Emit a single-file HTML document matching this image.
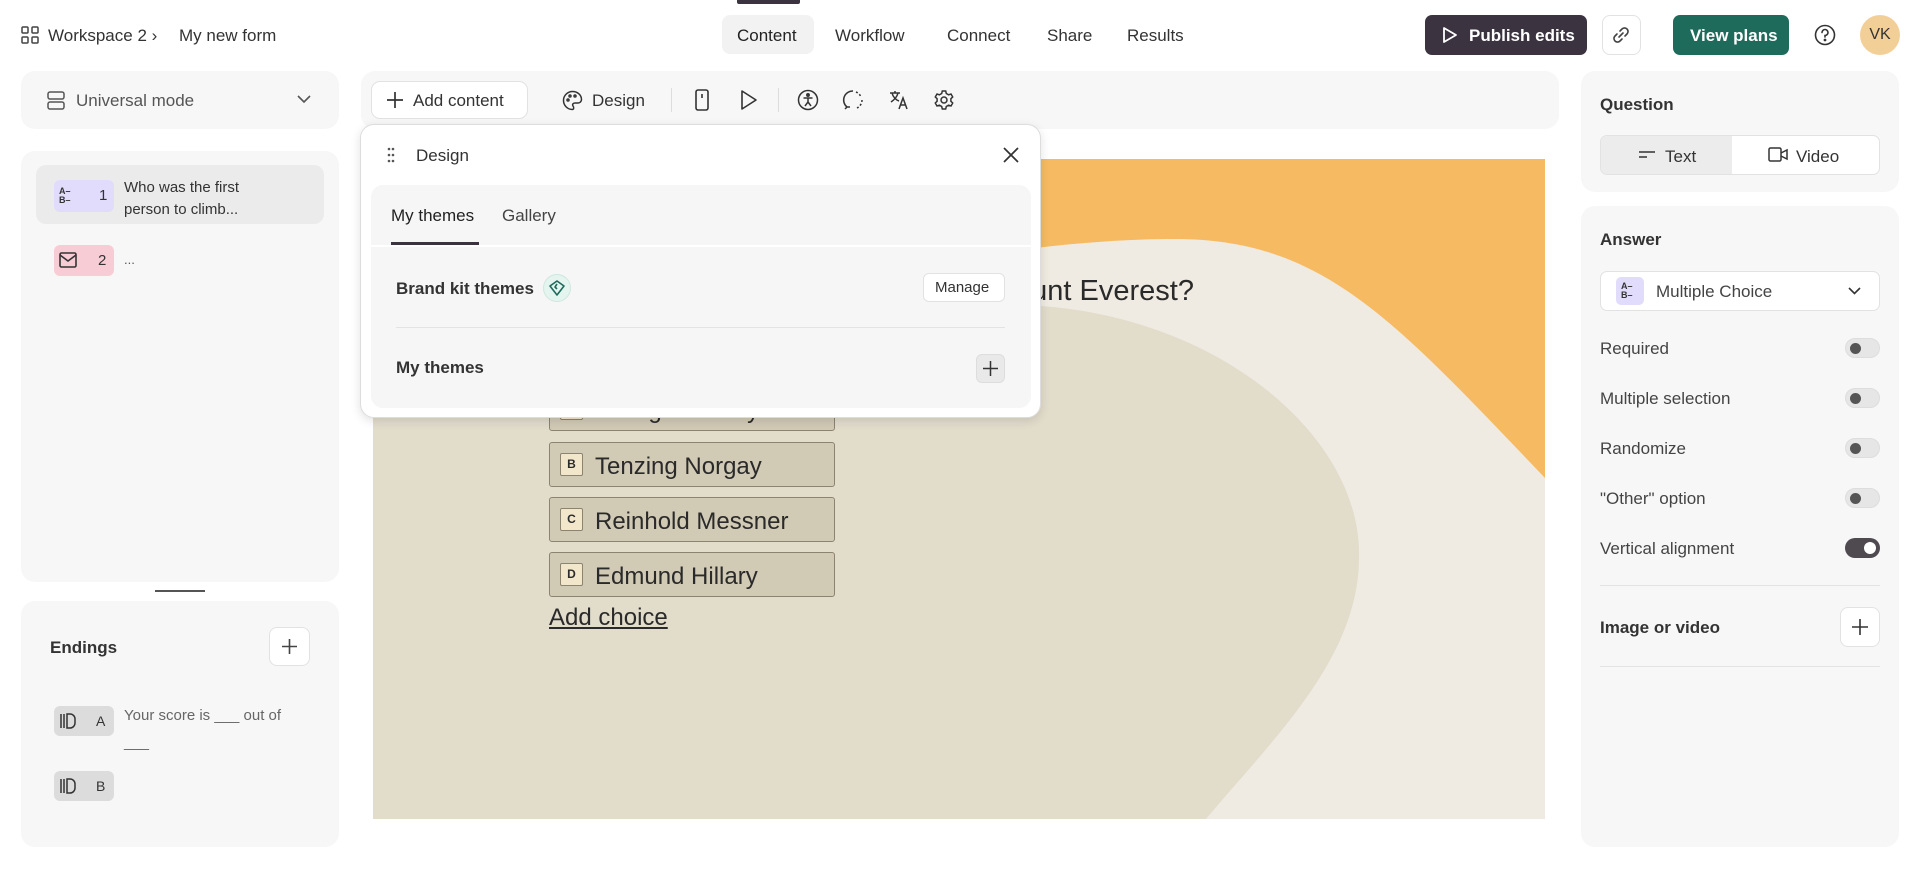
<!DOCTYPE html>
<html><head><meta charset="utf-8"><style>
*{box-sizing:border-box;margin:0;padding:0}
body{width:1920px;height:869px;background:#fff;font-family:"Liberation Sans",sans-serif;color:#2c2c2c;position:relative;overflow:hidden}
.a{position:absolute}
.panel{position:absolute;background:#f7f7f7;border-radius:14px}
.t{position:absolute;white-space:nowrap;line-height:1}
svg{position:absolute;overflow:visible}
.tog{position:absolute;left:1845px;width:35px;height:20px;border-radius:10px;background:#e6e6e6;border:1px solid #ddd}
.tog::after{content:"";position:absolute;left:4px;top:4px;width:11px;height:11px;border-radius:50%;background:#555}
.btn{position:absolute;background:#fff;border:1px solid #e2e2e2;border-radius:8px}
.choice{position:absolute;left:549px;width:286px;height:45px;background:#d1cab5;border:1px solid #8b8470;border-radius:3px}
.choice .k{position:absolute;left:10px;top:10px;width:23px;height:23px;background:#f3e7cb;border:1px solid #8b8470;border-radius:2px;font-size:12px;font-weight:bold;text-align:center;line-height:21px}
.choice .l{position:absolute;left:45px;top:10px;font-size:24px;color:#2a2a2a;white-space:nowrap}
</style></head><body>

<!-- top bar -->
<svg style="left:21px;top:26px" width="18" height="18" viewBox="0 0 18 18" fill="none" stroke="#444" stroke-width="1.5"><rect x="1" y="1" width="6" height="6" rx="1"/><rect x="11" y="1" width="6" height="6" rx="1"/><rect x="1" y="11" width="6" height="6" rx="1"/><rect x="11" y="11" width="6" height="6" rx="1"/></svg>
<div class="t" style="left:48px;top:27px;font-size:17px;color:#333">Workspace 2 ›</div>
<div class="t" style="left:179px;top:27px;font-size:17px;color:#333">My new form</div>

<div class="a" style="left:737px;top:0;width:63px;height:4px;background:#3b3440;border-radius:0 0 2px 2px"></div>
<div class="a" style="left:722px;top:15px;width:92px;height:39px;background:#f2f2f2;border-radius:8px"></div>
<div class="t" style="left:737px;top:27px;font-size:17px;color:#222">Content</div>
<div class="t" style="left:835px;top:27px;font-size:17px;color:#333">Workflow</div>
<div class="t" style="left:947px;top:27px;font-size:17px;color:#333">Connect</div>
<div class="t" style="left:1047px;top:27px;font-size:17px;color:#333">Share</div>
<div class="t" style="left:1127px;top:27px;font-size:17px;color:#333">Results</div>

<div class="a" style="left:1425px;top:15px;width:162px;height:40px;background:#3b3440;border-radius:7px"></div>
<svg style="left:1442px;top:26px" width="16" height="18" viewBox="0 0 16 18" fill="none" stroke="#fff" stroke-width="1.8" stroke-linejoin="round"><path d="M2 2 L14 9 L2 16 Z"/></svg>
<div class="t" style="left:1469px;top:27px;font-size:17px;color:#fff;font-weight:bold">Publish edits</div>
<div class="btn" style="left:1602px;top:15px;width:39px;height:40px"></div>
<svg style="left:1612px;top:26px" width="18" height="18" viewBox="0 0 18 18" fill="none" stroke="#444" stroke-width="1.6" stroke-linecap="round"><path d="M8 5 L10 3 A3 3 0 0 1 15 8 L13 10 M10 13 L8 15 A3 3 0 0 1 3 10 L5 8 M7 11 L11 7"/></svg>
<div class="a" style="left:1673px;top:15px;width:116px;height:40px;background:#1f6b5b;border-radius:7px"></div>
<div class="t" style="left:1690px;top:27px;font-size:17px;color:#fff;font-weight:bold">View plans</div>
<svg style="left:1814px;top:24px" width="22" height="22" viewBox="0 0 22 22" fill="none" stroke="#333" stroke-width="1.6"><circle cx="11" cy="11" r="9.5"/><path d="M8 8.5 A3 3 0 1 1 11 11.5 L11 13" stroke-linecap="round"/><circle cx="11" cy="16" r=".6" fill="#333"/></svg>
<div class="a" style="left:1860px;top:15px;width:40px;height:40px;border-radius:50%;background:#f3cf98;font-size:16px;line-height:40px;text-align:center;color:#333">VK</div>

<!-- left -->
<div class="panel" style="left:21px;top:71px;width:318px;height:58px"></div>
<svg style="left:47px;top:91px" width="18" height="19" viewBox="0 0 18 19" fill="none" stroke="#555" stroke-width="1.5"><rect x="1" y="1" width="16" height="7" rx="2"/><rect x="1" y="11" width="16" height="7" rx="2"/></svg>
<div class="t" style="left:76px;top:92px;font-size:17px;color:#555">Universal mode</div>
<svg style="left:297px;top:95px" width="14" height="9" viewBox="0 0 14 9" fill="none" stroke="#555" stroke-width="1.6"><path d="M1 1 L7 7 L13 1"/></svg>

<div class="panel" style="left:21px;top:151px;width:318px;height:431px"></div>
<div class="a" style="left:36px;top:165px;width:288px;height:59px;background:#ebebeb;border-radius:10px"></div>
<div class="a" style="left:54px;top:180px;width:60px;height:32px;background:#e1dcfb;border-radius:6px"></div>
<div class="t" style="left:59px;top:187px;font-size:9px;font-weight:bold;line-height:9px;color:#333">A–<br>B–</div>
<div class="t" style="left:99px;top:188px;font-size:15px;color:#333">1</div>
<div class="t" style="left:124px;top:177px;font-size:15px;color:#333;line-height:22px">Who was the first<br>person to climb...</div>
<div class="a" style="left:54px;top:245px;width:60px;height:31px;background:#f8ccd5;border-radius:6px"></div>
<svg style="left:59px;top:252px" width="18" height="16" viewBox="0 0 18 16" fill="none" stroke="#333" stroke-width="1.6"><rect x="1" y="1" width="16" height="14" rx="1.5"/><path d="M1 3 L9 9 L17 3"/></svg>
<div class="t" style="left:98px;top:253px;font-size:15px;color:#333">2</div>
<div class="t" style="left:124px;top:253px;font-size:13px;color:#555">...</div>

<div class="a" style="left:155px;top:590px;width:50px;height:2px;background:#555"></div>

<div class="panel" style="left:21px;top:601px;width:318px;height:246px"></div>
<div class="t" style="left:50px;top:639px;font-size:17px;font-weight:bold;color:#333">Endings</div>
<div class="btn" style="left:269px;top:627px;width:41px;height:39px"></div>
<svg style="left:281px;top:638px" width="17" height="17" viewBox="0 0 17 17" stroke="#444" stroke-width="1.6"><path d="M8.5 1 V16 M1 8.5 H16"/></svg>
<div class="a" style="left:54px;top:706px;width:60px;height:30px;background:#dcdcdc;border-radius:6px"></div>
<svg style="left:60px;top:713px" width="16" height="16" viewBox="0 0 16 16" fill="none" stroke="#333" stroke-width="1.5"><path d="M1 1 V15 M4 1 V15 M7 1 H10 A5 5 0 0 1 15 6 V10 A5 5 0 0 1 10 15 H7 Z"/></svg>
<div class="t" style="left:96px;top:714px;font-size:14px;color:#333">A</div>
<div class="t" style="left:124px;top:702px;font-size:15px;color:#666;line-height:27px">Your score is ___ out of<br>___</div>
<div class="a" style="left:54px;top:771px;width:60px;height:30px;background:#dcdcdc;border-radius:6px"></div>
<svg style="left:60px;top:778px" width="16" height="16" viewBox="0 0 16 16" fill="none" stroke="#333" stroke-width="1.5"><path d="M1 1 V15 M4 1 V15 M7 1 H10 A5 5 0 0 1 15 6 V10 A5 5 0 0 1 10 15 H7 Z"/></svg>
<div class="t" style="left:96px;top:779px;font-size:14px;color:#333">B</div>

<!-- toolbar -->
<div class="panel" style="left:361px;top:71px;width:1198px;height:58px"></div>
<div class="btn" style="left:371px;top:81px;width:157px;height:38px;border-radius:9px"></div>
<svg style="left:387px;top:92px" width="16" height="16" viewBox="0 0 16 16" stroke="#333" stroke-width="1.7"><path d="M8 0 V16 M0 8 H16"/></svg>
<div class="t" style="left:413px;top:92px;font-size:17px;color:#333">Add content</div>
<svg style="left:562px;top:90px" width="21" height="21" viewBox="0 0 21 21" fill="none" stroke="#333" stroke-width="1.5"><path d="M10.5 1.5 A9 9 0 1 0 10.5 19.5 C12 19.5 12 17 11 16 C10 14.5 11 13 13 13 H16 A3.5 3.5 0 0 0 19.5 9.5 C19.5 5 15.5 1.5 10.5 1.5 Z"/><circle cx="6" cy="10" r="1"/><circle cx="8" cy="6" r="1"/><circle cx="13" cy="6" r="1"/></svg>
<div class="t" style="left:592px;top:92px;font-size:17px;color:#333">Design</div>
<div class="a" style="left:671px;top:88px;width:1px;height:24px;background:#ddd"></div>
<svg style="left:695px;top:89px" width="14" height="22" viewBox="0 0 14 22" fill="none" stroke="#333" stroke-width="1.6"><rect x="1" y="1" width="12" height="20" rx="2"/><path d="M7 5 V9"/></svg>
<svg style="left:740px;top:89px" width="18" height="22" viewBox="0 0 18 22" fill="none" stroke="#333" stroke-width="1.6" stroke-linejoin="round"><path d="M2 2 L16 11 L2 20 Z"/></svg>
<div class="a" style="left:778px;top:88px;width:1px;height:24px;background:#ddd"></div>
<svg style="left:797px;top:89px" width="22" height="22" viewBox="0 0 22 22" fill="none" stroke="#333" stroke-width="1.5"><circle cx="11" cy="11" r="9.5"/><circle cx="11" cy="6" r="1.2" fill="#333"/><path d="M6.5 9 H15.5 M11 9 V13 L8 17 M11 13 L14 17"/></svg>
<svg style="left:842px;top:89px" width="22" height="22" viewBox="0 0 22 22" fill="none" stroke="#333" stroke-width="1.5"><path d="M11 2 A9 9 0 0 0 5 18" /><path d="M5 18 L3 20 M5 18 L8 18"/><path d="M14 3 A9 9 0 0 1 19 8" stroke-dasharray="2 2"/><path d="M20 11 A9 9 0 0 1 15 19" stroke-dasharray="2 2"/></svg>
<svg style="left:888px;top:89px" width="22" height="22" viewBox="0 0 22 22" fill="none" stroke="#333" stroke-width="1.5"><path d="M2 4 H12 M7 2 V4 M4 4 C5 8 8 11 11 12 M10 4 C9 8 6 11 3 13 M11 20 L15 9 L19 20 M12.5 16 H17.5"/></svg>
<svg style="left:933px;top:89px" width="22" height="22" viewBox="0 0 22 22" fill="none" stroke="#333" stroke-width="1.5"><circle cx="11" cy="11" r="3"/><path d="M9.3 2 H12.7 L13.3 4.5 L15.6 5.8 L18 5 L19.7 8 L17.9 9.7 V12.3 L19.7 14 L18 17 L15.6 16.2 L13.3 17.5 L12.7 20 H9.3 L8.7 17.5 L6.4 16.2 L4 17 L2.3 14 L4.1 12.3 V9.7 L2.3 8 L4 5 L6.4 5.8 L8.7 4.5 Z"/></svg>

<!-- canvas -->
<svg style="left:373px;top:159px" width="1172" height="660" viewBox="0 0 1172 660">
<rect width="1172" height="660" fill="#f6bb62"/>
<path d="M0,257 C300,150 600,80 802,80 C950,80 1020,160 1172,319 L1172,660 L0,660 Z" fill="#efebe2"/>
<path d="M0,210 C250,150 500,140 668,147 C850,160 990,280 986,400 C985,500 900,580 833,660 L0,660 Z" fill="#e2dccb"/>
</svg>
<div class="t" style="left:0px;top:277px;width:1194px;text-align:right;font-size:29px;color:#2a2a2a">Who was the first person to climb Mount Everest?</div>
<div class="choice" style="top:386px"><div class="k">A</div><div class="l">George Mallory</div></div>
<div class="choice" style="top:442px"><div class="k">B</div><div class="l">Tenzing Norgay</div></div>
<div class="choice" style="top:497px"><div class="k">C</div><div class="l">Reinhold Messner</div></div>
<div class="choice" style="top:552px"><div class="k">D</div><div class="l">Edmund Hillary</div></div>
<div class="t" style="left:549px;top:606px;font-size:24px;color:#2a2a2a;text-decoration:underline">Add choice</div>

<!-- design popup -->
<div class="a" style="left:360px;top:124px;width:681px;height:294px;background:#fff;border:1px solid #ddd;border-radius:14px;box-shadow:0 3px 10px rgba(0,0,0,.12)"></div>
<svg style="left:387px;top:147px" width="8" height="16" viewBox="0 0 8 16" fill="#555"><circle cx="2" cy="2" r="1.3"/><circle cx="6" cy="2" r="1.3"/><circle cx="2" cy="8" r="1.3"/><circle cx="6" cy="8" r="1.3"/><circle cx="2" cy="14" r="1.3"/><circle cx="6" cy="14" r="1.3"/></svg>
<div class="t" style="left:416px;top:147px;font-size:17px;color:#333">Design</div>
<svg style="left:1003px;top:147px" width="16" height="16" viewBox="0 0 16 16" stroke="#333" stroke-width="1.7"><path d="M1 1 L15 15 M15 1 L1 15"/></svg>
<div class="a" style="left:371px;top:185px;width:660px;height:223px;background:#f6f6f6;border-radius:12px"></div>
<div class="a" style="left:371px;top:245px;width:660px;height:2px;background:#fff"></div>
<div class="t" style="left:391px;top:207px;font-size:17px;color:#222">My themes</div>
<div class="t" style="left:502px;top:207px;font-size:17px;color:#444">Gallery</div>
<div class="a" style="left:391px;top:242px;width:88px;height:3px;background:#3b3440"></div>
<div class="t" style="left:396px;top:280px;font-size:17px;color:#333;font-weight:bold">Brand kit themes</div>
<div class="a" style="left:543px;top:274px;width:28px;height:28px;border-radius:50%;background:#e4f4ee;border:1px solid #cfe7de"></div>
<svg style="left:548px;top:279px" width="18" height="18" viewBox="0 0 18 18" fill="none" stroke="#1f6b5b" stroke-width="1.6" stroke-linejoin="round"><path d="M9 2 L16 7 L9 16 L2 7 Z M9 5 L7 8 L9 10"/></svg>
<div class="btn" style="left:923px;top:273px;width:82px;height:29px;border-radius:6px"></div>
<div class="t" style="left:935px;top:280px;font-size:15px;color:#333">Manage</div>
<div class="a" style="left:396px;top:327px;width:609px;height:1px;background:#e3e3e3"></div>
<div class="t" style="left:396px;top:359px;font-size:17px;color:#333;font-weight:bold">My themes</div>
<div class="a" style="left:976px;top:354px;width:29px;height:29px;background:#e9e9e9;border:1px solid #ddd;border-radius:6px"></div>
<svg style="left:983px;top:361px" width="15" height="15" viewBox="0 0 15 15" stroke="#333" stroke-width="1.5"><path d="M7.5 0 V15 M0 7.5 H15"/></svg>

<!-- right -->
<div class="panel" style="left:1581px;top:71px;width:318px;height:121px"></div>
<div class="t" style="left:1600px;top:96px;font-size:17px;color:#333;font-weight:bold">Question</div>
<div class="a" style="left:1600px;top:135px;width:280px;height:40px;background:#fff;border:1px solid #e2e2e2;border-radius:7px;overflow:hidden"><div class="a" style="left:0;top:0;width:131px;height:40px;background:#ececec"></div></div>
<svg style="left:1639px;top:151px" width="16" height="8" viewBox="0 0 16 8" stroke="#333" stroke-width="1.6"><path d="M0 1 H16 M0 6 H8"/></svg>
<div class="t" style="left:1665px;top:148px;font-size:17px;color:#333">Text</div>
<svg style="left:1768px;top:147px" width="20" height="15" viewBox="0 0 20 15" fill="none" stroke="#333" stroke-width="1.5"><rect x="1" y="1" width="12" height="13" rx="1.5"/><path d="M13 6 L19 3 V12 L13 9"/></svg>
<div class="t" style="left:1796px;top:148px;font-size:17px;color:#333">Video</div>

<div class="panel" style="left:1581px;top:206px;width:318px;height:641px"></div>
<div class="t" style="left:1600px;top:231px;font-size:17px;color:#333;font-weight:bold">Answer</div>
<div class="a" style="left:1600px;top:271px;width:280px;height:40px;background:#fff;border:1px solid #e2e2e2;border-radius:7px"></div>
<div class="a" style="left:1616px;top:277px;width:28px;height:28px;background:#e1dcfb;border-radius:5px"></div>
<div class="t" style="left:1621px;top:282px;font-size:9px;font-weight:bold;line-height:9px;color:#333">A–<br>B–</div>
<div class="t" style="left:1656px;top:283px;font-size:17px;color:#444">Multiple Choice</div>
<svg style="left:1848px;top:287px" width="13" height="8" viewBox="0 0 13 8" fill="none" stroke="#333" stroke-width="1.6"><path d="M1 1 L6.5 6.5 L12 1"/></svg>

<div class="t" style="left:1600px;top:340px;font-size:17px;color:#444">Required</div><div class="tog" style="top:338px"></div>
<div class="t" style="left:1600px;top:390px;font-size:17px;color:#444">Multiple selection</div><div class="tog" style="top:388px"></div>
<div class="t" style="left:1600px;top:440px;font-size:17px;color:#444">Randomize</div><div class="tog" style="top:438px"></div>
<div class="t" style="left:1600px;top:490px;font-size:17px;color:#444">"Other" option</div><div class="tog" style="top:488px"></div>
<div class="t" style="left:1600px;top:540px;font-size:17px;color:#444">Vertical alignment</div>
<div class="a" style="left:1845px;top:538px;width:35px;height:20px;border-radius:10px;background:#4e4a50"><div class="a" style="left:19px;top:4px;width:12px;height:12px;border-radius:50%;background:#fff"></div></div>
<div class="a" style="left:1600px;top:585px;width:280px;height:1px;background:#e3e3e3"></div>
<div class="t" style="left:1600px;top:619px;font-size:17px;color:#333;font-weight:bold">Image or video</div>
<div class="btn" style="left:1840px;top:607px;width:40px;height:40px"></div>
<svg style="left:1852px;top:619px" width="16" height="16" viewBox="0 0 16 16" stroke="#333" stroke-width="1.6"><path d="M8 0 V16 M0 8 H16"/></svg>
<div class="a" style="left:1600px;top:666px;width:280px;height:1px;background:#e3e3e3"></div>
</body></html>
